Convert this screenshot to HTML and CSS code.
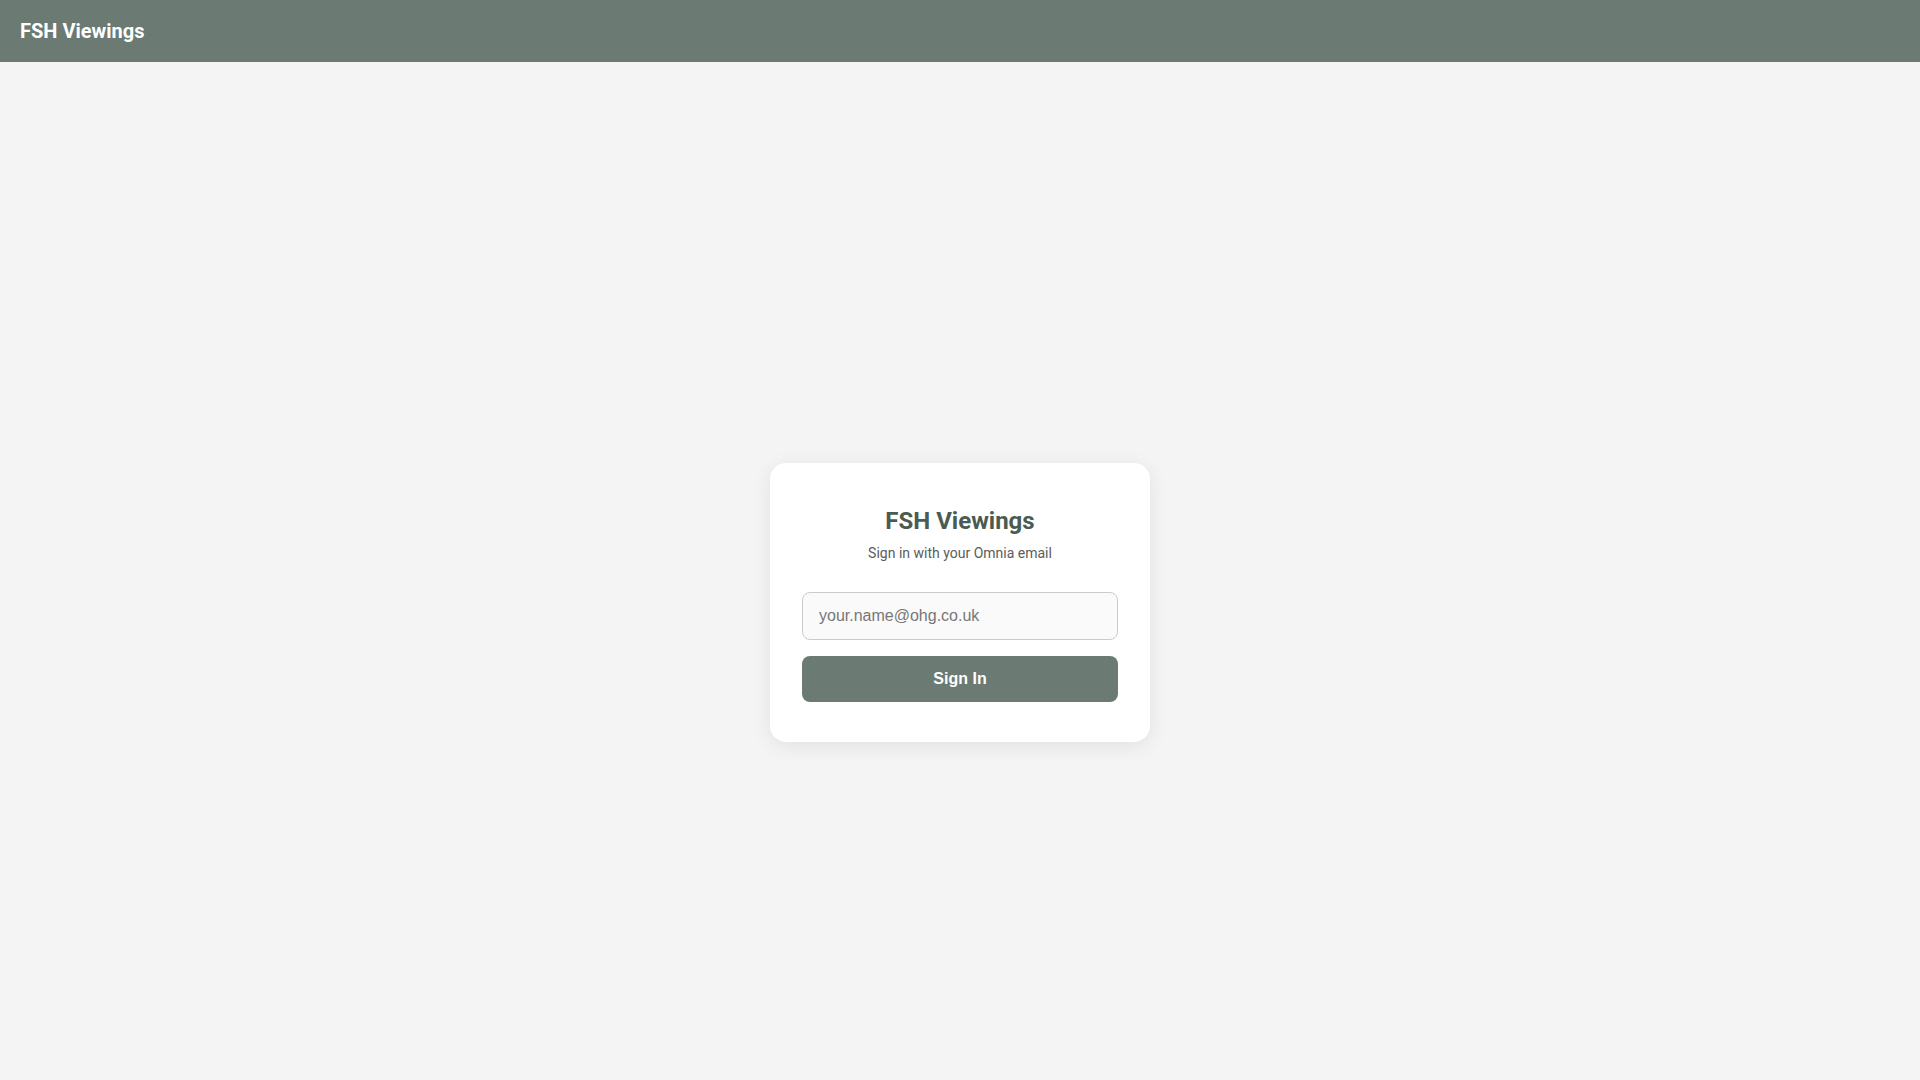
FILE: index.html
```html
<!DOCTYPE html>
<html lang="en">
<head>
<meta charset="utf-8">
<title>FSH Viewings</title>
<link rel="stylesheet" href="styles.css">
</head>
<body>
<header class="topbar">
  <div class="brand">FSH Viewings</div>
</header>
<main class="main">
  <div class="card">
    <h1 class="card-title">FSH Viewings</h1>
    <p class="card-sub">Sign in with your Omnia email</p>
    <form class="form">
      <input class="input" type="email" placeholder="your.name@ohg.co.uk">
      <button class="btn" type="button">Sign In</button>
    </form>
  </div>
</main>
</body>
</html>
```

FILE: styles.css
```css
* { box-sizing: border-box; }
html, body { margin: 0; padding: 0; }
body {
  background: #f4f4f4;
  font-family: Roboto, "Liberation Sans", Arial, sans-serif;
  line-height: 1.5;
  color: #333;
}
.topbar {
  height: 62px;
  background: #6b7a72;
  display: flex;
  align-items: center;
  padding: 0 20px;
}
.brand {
  color: #ffffff;
  font-size: 20px;
  font-weight: 700;
}
.main {
  min-height: 100vh;
  display: flex;
  align-items: center;
  justify-content: center;
}
.card {
  width: 380px;
  background: #ffffff;
  border-radius: 16px;
  box-shadow: 0 4px 20px rgba(0, 0, 0, 0.08);
  padding: 40px 32px;
  text-align: center;
}
.card-title {
  margin: 0 0 4px;
  font-size: 24px;
  font-weight: 700;
  color: #4a5b51;
}
.card-sub {
  margin: 0 0 28px;
  font-size: 14px;
  color: #5c5c5c;
}
.form {
  display: flex;
  flex-direction: column;
  gap: 16px;
}
.input {
  width: 100%;
  height: 48px;
  padding: 0 16px;
  border: 1px solid #cccccc;
  border-radius: 8px;
  background: #fafafa;
  font-family: "Liberation Sans", Arial, sans-serif;
  font-size: 16px;
  color: #333;
  outline: none;
}
.input::placeholder { color: #777; }
.btn {
  height: 46px;
  border: none;
  border-radius: 8px;
  background: #6b7a72;
  color: #ffffff;
  font-family: "Liberation Sans", Arial, sans-serif;
  font-size: 16px;
  font-weight: 700;
  cursor: pointer;
}
```
